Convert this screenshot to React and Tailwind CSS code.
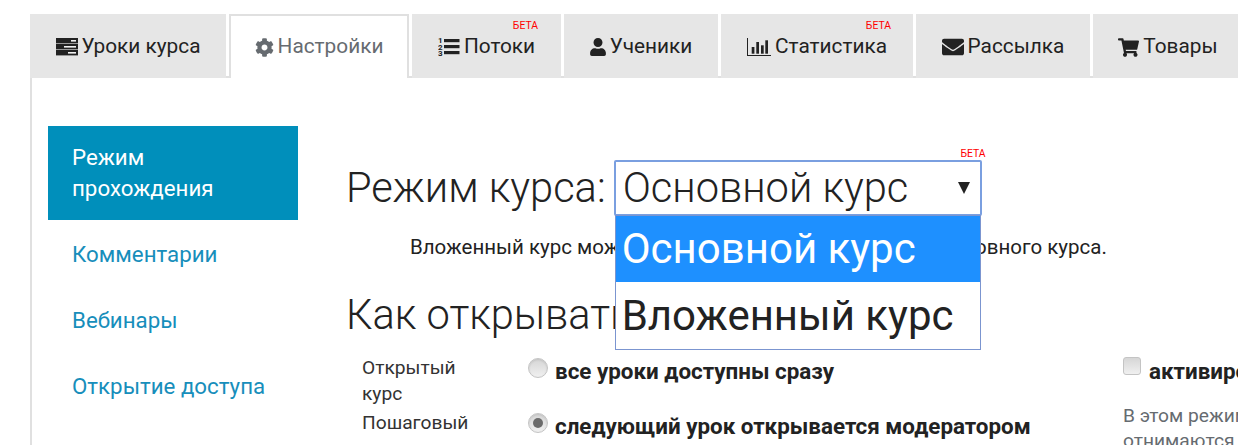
import React from "react";
import { FaCog, FaUser, FaEnvelope, FaShoppingCart } from "react-icons/fa";

function ServerIcon() {
  return (
    <svg viewBox="0 0 22 18" className="w-[22px] h-[18px]">
      {[
        { y: 0, x: 15 },
        { y: 6, x: 8 },
        { y: 12, x: 12 },
      ].map((row) => (
        <g key={row.y}>
          <rect x="0" y={row.y} width="22" height="5.4" fill="#222222" />
          <rect x={row.x} y={row.y + 2} width={20 - row.x} height="1.6" fill="#f2f2f2" />
        </g>
      ))}
    </svg>
  );
}

function ListIcon() {
  return (
    <svg viewBox="0 0 22 21" className="w-[22px] h-[21px]">
      <text x="0" y="6" fontSize="8" fontWeight="700" fill="#222222">1</text>
      <text x="0" y="12.5" fontSize="8" fontWeight="700" fill="#222222">2</text>
      <text x="0" y="19" fontSize="8" fontWeight="700" fill="#222222">3</text>
      <rect x="6" y="2" width="15.5" height="3.2" fill="#222222" />
      <rect x="6" y="8" width="15.5" height="3.2" fill="#222222" />
      <rect x="6" y="14" width="15.5" height="3.2" fill="#222222" />
    </svg>
  );
}

function ChartIcon() {
  return (
    <svg viewBox="0 0 24 18" className="w-[24px] h-[18px]" fill="#222222">
      <rect x="0" y="0" width="1" height="18" />
      <rect x="0" y="17" width="24" height="1" />
      <rect x="4.7" y="9" width="2.7" height="6.7" />
      <rect x="9.3" y="4" width="2.7" height="11.7" />
      <rect x="14" y="7.3" width="2.7" height="8.4" />
      <rect x="18.3" y="2.3" width="2.7" height="13.4" />
    </svg>
  );
}

const tabs = [
  { label: "Уроки курса", icon: <ServerIcon />, width: "w-[196px]" },
  { label: "Настройки", icon: <FaCog className="w-[19px] h-[19px]" />, width: "w-[180px]", active: true },
  { label: "Потоки", icon: <ListIcon />, width: "w-[149px]", beta: "right-[23px]" },
  { label: "Ученики", icon: <FaUser className="w-[16px] h-[18px]" />, width: "w-[154px]" },
  { label: "Статистика", icon: <ChartIcon />, width: "w-[192px]", beta: "right-[22px]" },
  { label: "Рассылка", icon: <FaEnvelope className="w-[22px] h-[22px]" />, width: "w-[174px]" },
  { label: "Товары", icon: <FaShoppingCart className="w-[21px] h-[21px]" />, width: "w-[150px]" },
];

function Tab({ tab }) {
  return (
    <div
      className={`relative shrink-0 h-[64px] flex items-center justify-center gap-[4px] text-[20.8px] ${tab.width} ${
        tab.active
          ? "bg-white border-2 border-b-0 border-[#e0e0e0] text-[#666b70]"
          : "bg-[#e6e6e6] text-[#222222] pt-[2px]"
      }`}
    >
      {tab.beta && (
        <span className={`absolute top-[6px] text-[10.4px] leading-[12px] text-[#ff0000] ${tab.beta}`}>БЕТА</span>
      )}
      {tab.icon}
      <span>{tab.label}</span>
    </div>
  );
}

function Radio({ checked }) {
  return (
    <span className="shrink-0 mt-[3px] w-[20px] h-[20px] rounded-full border border-[#c4c4c4] bg-gradient-to-b from-[#d6d6d6] to-[#f0f0f0] shadow-[inset_0_1px_2px_rgba(0,0,0,0.1)] flex items-center justify-center">
      {checked && <span className="w-[10px] h-[10px] rounded-full bg-[#6b6b6b]" />}
    </span>
  );
}

export default function App() {
  return (
    <div
      className="w-[1238px] h-[445px] overflow-hidden bg-white text-[#222222] pt-[14px] pl-[30px]"
      style={{ fontFamily: "Roboto, sans-serif" }}
    >
      <div className="flex gap-[3px] h-[64px] border-b-2 border-[#e0e0e0] relative z-10 w-[1400px]">
        {tabs.map((tab) => (
          <Tab key={tab.label} tab={tab} />
        ))}
      </div>

      <div className="flex border-l-2 border-[#e0e0e0] pl-[16px] h-[400px] w-[1400px]">
        <nav className="shrink-0 w-[250px] mt-[48px] text-[22.3px] text-[#178ebb]">
          <div className="bg-[#008fbb] text-white px-[24px] py-[16px] leading-[31px] h-[94px]">
            Режим
            <br />
            прохождения
          </div>
          <div className="px-[24px] mt-[19px] leading-[30px]">Комментарии</div>
          <div className="px-[24px] mt-[36px] leading-[30px]">Вебинары</div>
          <div className="px-[24px] mt-[36px] leading-[30px] whitespace-nowrap">Открытие доступа</div>
        </nav>

        <main className="ml-[48px] min-w-0 flex-1 pt-[82px]">
          <div className="flex items-center h-[56px]">
            <h1 className="text-[41.6px] font-light leading-[56px] whitespace-nowrap">Режим курса:</h1>
            <div className="relative ml-[8px] w-[368px] h-[56px] border-2 border-[#7a9fe0] rounded-[2px] bg-white">
              <span className="absolute -top-[14px] right-[-6px] text-[10.4px] leading-[12px] text-[#ff0000]">БЕТА</span>
              <div className="flex items-center justify-between h-full pl-[7px] pr-[10px] text-[41.6px] font-light">
                <span>Основной курс</span>
                <span className="w-0 h-0 border-x-[6px] border-x-transparent border-t-[12px] border-t-[#222222]" />
              </div>
              <div className="absolute z-20 top-[53px] -left-[1px] w-[366px] h-[135px] border border-[#7b95d0] bg-white text-[42px]">
                <div className="h-[66px] bg-[#1e90ff] text-white pl-[6px] leading-[66px]">Основной курс</div>
                <div className="h-[68px] pl-[6px] leading-[68px]">Вложенный курс</div>
              </div>
            </div>
          </div>

          <p className="ml-[64px] mt-[18px] text-[20.5px] leading-[26px] whitespace-nowrap">
            Вложенный курс можно открыть только для учеников основного курса.
          </p>

          <h2 className="text-[41.6px] font-light leading-[56px] mt-[27px] whitespace-nowrap">Как открывать уроки?</h2>

          <div className="flex mt-[12px] ml-[16px] text-[19.2px] leading-[26px]">
            <div className="w-[761px] shrink-0">
              <div className="flex h-[55px]">
                <div className="w-[166px] shrink-0 text-[#333333]">
                  Открытый
                  <br />
                  курс
                </div>
                <label className="flex items-start gap-[7px] font-bold text-[22.4px]">
                  <Radio />
                  <span className="mt-[3px] whitespace-nowrap">все уроки доступны сразу</span>
                </label>
              </div>
              <div className="flex">
                <div className="w-[166px] shrink-0 text-[#333333]">Пошаговый</div>
                <label className="flex items-start gap-[7px] font-bold text-[22.4px]">
                  <Radio checked />
                  <span className="mt-[3px] whitespace-nowrap">следующий урок открывается модератором</span>
                </label>
              </div>
            </div>
            <div className="min-w-0">
              <label className="flex items-start gap-[8px] font-bold text-[22.4px]">
                <span className="shrink-0 mt-[2px] w-[18px] h-[18px] rounded-[3px] border border-[#c4c4c4] bg-gradient-to-b from-[#d6d6d6] to-[#f0f0f0]" />
                <span className="mt-[3px] whitespace-nowrap">активировать стоп-уроки</span>
              </label>
              <p className="mt-[19px] leading-[25px] text-[#666b70] whitespace-nowrap">
                В этом режиме
                <br />
                отнимаются
              </p>
            </div>
          </div>
        </main>
      </div>
    </div>
  );
}
